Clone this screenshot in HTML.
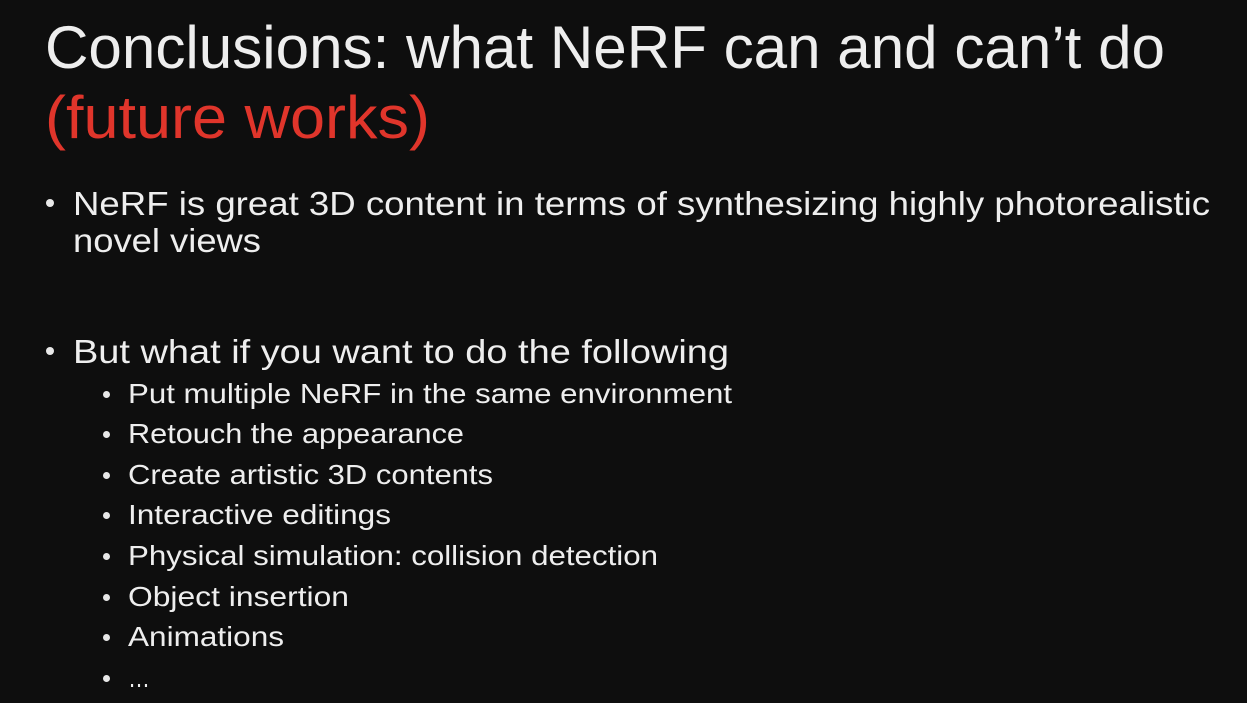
<!DOCTYPE html>
<html><head><meta charset="utf-8"><style>
html,body{margin:0;padding:0;background:#0e0e0e;width:1247px;height:703px;overflow:hidden}
.t{position:absolute;font-family:"Liberation Sans",sans-serif;color:#eeeeee;white-space:nowrap;transform-origin:0 0;line-height:1}
.d{position:absolute;border-radius:50%;background:#e8e8e8}
</style></head><body>
<div class="t" data-w="1120" style="left:45px;top:18px;font-size:60px">Conclusions: what NeRF can and can’t do</div>
<div class="t" data-w="385" style="left:45px;top:88px;font-size:60px;color:#e0352b">(future works)</div>

<div class="d" style="left:46px;top:199px;width:8px;height:8px"></div>
<div class="t" data-w="1137" style="left:73px;top:187px;font-size:33px">NeRF is great 3D content in terms of synthesizing highly photorealistic</div>
<div class="t" data-w="188" style="left:73px;top:224px;font-size:33px">novel views</div>

<div class="d" style="left:46px;top:347px;width:8px;height:8px"></div>
<div class="t" data-w="656" style="left:73px;top:335px;font-size:33px">But what if you want to do the following</div>

<div class="d" style="left:103px;top:391px;width:7px;height:7px"></div>
<div class="t" data-w="604" style="left:128px;top:380px;font-size:28px">Put multiple NeRF in the same environment</div>
<div class="d" style="left:103px;top:431px;width:7px;height:7px"></div>
<div class="t" data-w="336" style="left:128px;top:420px;font-size:28px">Retouch the appearance</div>
<div class="d" style="left:103px;top:472px;width:7px;height:7px"></div>
<div class="t" data-w="365" style="left:128px;top:461px;font-size:28px">Create artistic 3D contents</div>
<div class="d" style="left:103px;top:512px;width:7px;height:7px"></div>
<div class="t" data-w="263" style="left:128px;top:501px;font-size:28px">Interactive editings</div>
<div class="d" style="left:103px;top:553px;width:7px;height:7px"></div>
<div class="t" data-w="530" style="left:128px;top:542px;font-size:28px">Physical simulation: collision detection</div>
<div class="d" style="left:103px;top:594px;width:7px;height:7px"></div>
<div class="t" data-w="221" style="left:128px;top:583px;font-size:28px">Object insertion</div>
<div class="d" style="left:103px;top:634px;width:7px;height:7px"></div>
<div class="t" data-w="156" style="left:128px;top:623px;font-size:28px">Animations</div>
<div class="d" style="left:103px;top:675px;width:7px;height:7px"></div>
<div class="t" data-w="22" style="left:128px;top:664px;font-size:28px">…</div>
<script>
document.querySelectorAll('.t').forEach(function(e){var w=e.getBoundingClientRect().width;var t=+e.dataset.w;if(w>0)e.style.transform='scaleX('+(t/w)+')';});
</script>
</body></html>
